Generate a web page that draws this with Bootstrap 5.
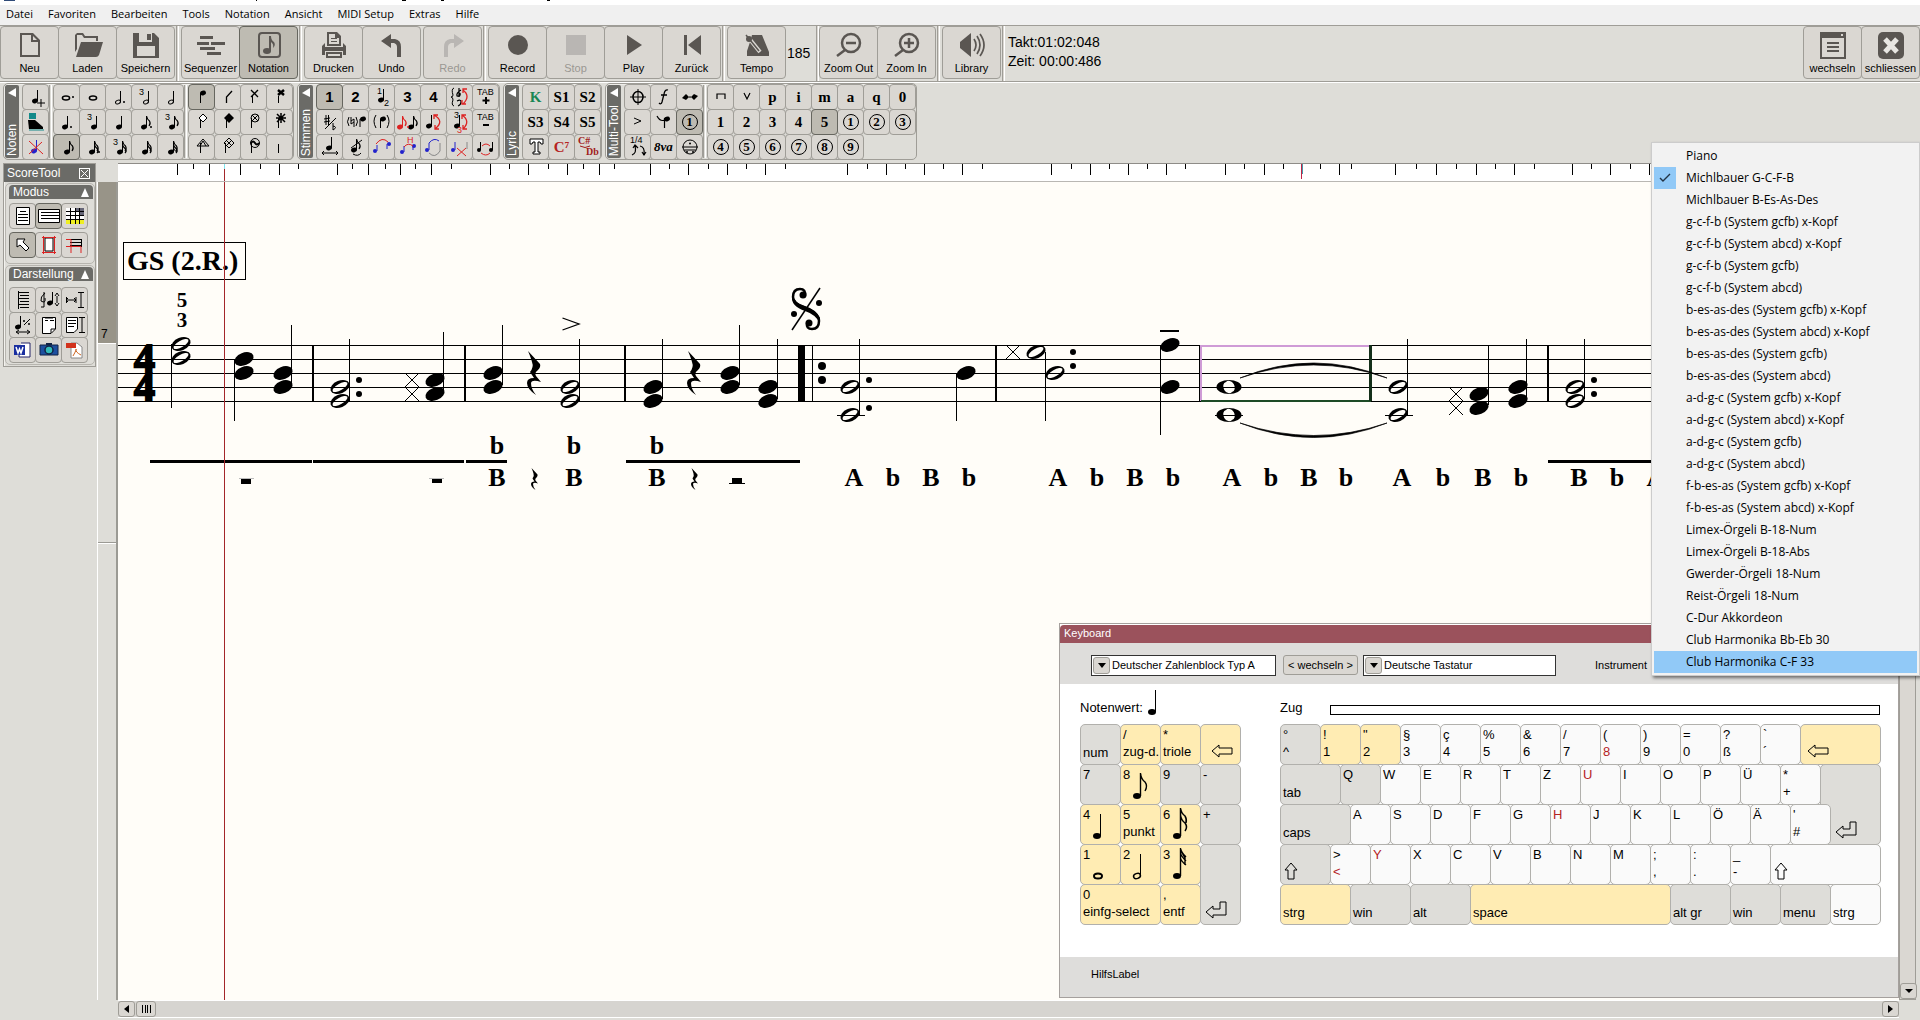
<!DOCTYPE html>
<html lang="de">
<head>
<meta charset="utf-8">
<meta name="viewport" content="width=device-width, initial-scale=1">
<title>Notation</title>
<link href="https://cdn.jsdelivr.net/npm/bootstrap@5.3.0/dist/css/bootstrap.min.css" rel="stylesheet">
<style>
:root{--face:#deddd8;--btn:#dad7d2;--line:#9f9d97;--dark:#6b6b67;--ink:#5a5652;--paper:#fffdf8}
body{background:var(--face);font:11px/14px "Liberation Sans",Arial,sans-serif;color:#000;overflow:hidden}
button{font:inherit;color:inherit;padding:0}
svg{display:block;flex:none}
.title-rest{height:5px;background:#fff}
.menubar{height:20px;background:#f0f0f0;font:11px/18px "Open Sans","Noto Sans",sans-serif;padding-left:6px}
.menubar a{color:#000;text-decoration:none;margin-right:15px;white-space:nowrap}
.bar-one{height:57px;border-top:1px solid var(--line);border-bottom:1px solid var(--line);padding-right:1px}
.tool{width:59px;height:53px;margin-right:-1px;border:1px solid var(--line);border-radius:4px;background:var(--btn);display:flex;flex-direction:column;align-items:center;padding-top:3px;color:#000;white-space:nowrap}
.tool svg{width:30px;height:30px;fill:var(--ink);stroke:none;color:var(--ink);margin-bottom:1px}
.tool:disabled{color:#9a9893}
.tool:disabled svg{fill:#b9b6b3;color:#b9b6b3}
.pressed{background:#bebbb2!important;border-color:#66665f!important;z-index:1;position:relative}
.gapline{width:3px;margin:0 2px;border-left:1px solid var(--line);border-right:1px solid #fff;background:var(--btn);flex:none}
.slot{width:3px}
.tempo{width:31px;border:0;background:transparent;font-size:14px;padding:0 0 2px 2px;flex:none}
.clock{font-size:14px;line-height:19px;padding:7px 0 0 3px;white-space:nowrap}
.bar-two{height:81px;padding:0 3px 3px;border-top:1px solid #fff;gap:3px}
.grp{border:1px solid var(--line);border-radius:5px;padding:0 1px;display:flex;box-shadow:inset 1px 1px 0 #efeeea}
.strip{width:14px;margin:1px 3px 1px 0;background:var(--dark);border:0;border-radius:2px;color:#fff;display:flex;flex-direction:column;align-items:center;justify-content:space-between;padding:3px 0 2px;font-size:12px;line-height:14px}
.strip span{writing-mode:vertical-rl;transform:rotate(180deg)}
.cells{display:grid;grid-auto-rows:25px}
.c1{grid-template-columns:26px}.c3{grid-template-columns:repeat(3,26px)}.c4{grid-template-columns:repeat(4,26px)}
.c5{grid-template-columns:repeat(5,26px)}.c7{grid-template-columns:repeat(7,26px)}.c8{grid-template-columns:repeat(8,26px)}
.cells button{margin:0 -1px -1px 0;border:1px solid var(--line);border-radius:4px;background:var(--btn);display:flex;align-items:center;justify-content:center;overflow:hidden}
.cells svg{width:24px;height:24px}
.split{width:3px;margin:1px;border-left:1px solid var(--line);border-right:1px solid #fff}
.num{font-size:15px;font-weight:700}
.ser{font-family:"Liberation Serif","Times New Roman",serif;font-size:15px;font-weight:700}
.ring{width:16px;height:16px;border:1px solid #000;border-radius:50%;line-height:14px;font-size:13px}
.tx{font:9px "Liberation Sans",sans-serif;stroke:none}
.ts{font:bold 10px "Liberation Serif",serif;stroke:none}
.oct{font:italic bold 13px "Liberation Serif",serif}
.ln{fill:none;stroke:currentColor}
.workspace{flex:1;min-height:0}
.side{width:97px;padding:0 1px 0 3px;flex:none}
.panel{border:1px solid var(--line);box-shadow:inset 1px 1px 0 #f3f2ee}
.panel-title{height:18px;background:var(--dark);color:#fff;font-size:12px;line-height:17px;padding:0 5px 0 3px}
.panel-title button{width:11px;height:11px;border:1px solid #fff;background:none}
.sect{border:1px solid #b7b5af;border-radius:5px;margin:1px 0 1px 1px;padding:1px 1px 6px 3px}
.sect-h{height:14px;width:100%;border:0;background:var(--dark);color:#fff;border-radius:4px 4px 0 0;font-size:12px;line-height:14px;padding:0 4px}
.sect .cells{margin:4px 0 0 0}
.sect-low{padding-bottom:2px}
.sect-low .cells{margin-top:6px}
.track{width:21px;flex:none;border-left:1px solid #fff;border-right:2px solid #9b9a94;margin-top:19px}
.track-on{height:162px;background:#989488;border-bottom:1px solid #fff;font-size:12px;padding:0 0 2px 3px}
.track-off{height:200px;border-bottom:1px solid #fff;box-shadow:0 -1px 0 #9b9a94 inset}
.ruler{height:19px;background:#fff;border-top:1px solid #8e8c88;border-bottom:1px solid #b9b7b3}
.sheet{background:var(--paper);flex:1;position:relative;min-height:0}
.fit{position:absolute;inset:0;width:100%;height:100%}
.lyr{font:bold 26px "Liberation Serif","Times New Roman",serif;text-anchor:middle}
.fing{font:bold 21px "Liberation Serif","Times New Roman",serif;text-anchor:middle}
.mark-t{font:bold 28px "Liberation Serif","Times New Roman",serif}
.sig{font:bold 42px "Liberation Serif","Times New Roman",serif;stroke:#000;stroke-width:2}
.vscroll{width:17px;flex:none;border:1px solid var(--line);background:var(--btn);margin-right:4px}
.vscroll button,.hscroll button{border:1px solid var(--line);background:var(--btn);border-radius:3px;width:17px;height:16px;display:flex;align-items:center;justify-content:center}
.hscroll .thumb{width:20px;margin-left:1px}
.hrow{height:20px;padding:0 21px 0 118px}
.hscroll{height:18px;background:#d6d4d0;border-top:1px solid #fff;border-bottom:1px solid #fff}
.kbwin{position:absolute;right:0;bottom:2px;width:840px;border:1px solid #a5a09d;background:#fff;overflow:hidden}
.kb-title{height:18px;margin-top:1px;background:#9b525c;color:#fff;line-height:17px;padding-left:4px;border-radius:4px 0 0 0}
.kb-tools{height:41px;background:#dedddb;padding:3px 0 0 31px}
.combo{height:21px;border:1px solid #333;background:#fff;display:flex;flex:none}
.combo i{width:17px;margin:1px;border:1px solid var(--line);background:var(--btn);border-radius:3px;display:flex;align-items:center;justify-content:center}
.combo select{appearance:none;border:0;background:#fff;flex:1;padding:0 0 0 1px;font-size:11px;min-width:0}
.wide-a{width:185px}.wide-b{width:193px}
.inst{margin:0 8px 0 39px}
.kb-swap{width:75px;height:20px;border:1px solid var(--line);border-radius:3px;background:var(--btn);margin:0 5px 0 7px;flex:none}
.kb-body{height:273px;padding:0 0 0 20px;gap:40px;font-size:13px;line-height:17px}
.kb-head{height:40px;padding-bottom:8px}
.nval{margin-left:5px}
.zl{width:50px}
.zug{flex:1;height:10px;border:1px solid #000;margin-bottom:1px}
.keys-n{display:grid;grid-template-columns:repeat(4,40px);grid-auto-rows:40px}
.keys-m{display:grid;grid-template-columns:repeat(60,10px);grid-auto-rows:40px}
.key{margin:0 -1px -1px 0;border:1px solid #b1b0ac;border-radius:5px;background:#fafafa;text-align:left;padding:1px 0 3px 2px;display:flex;flex-direction:column;white-space:nowrap;position:relative;grid-column:span 4}
.keys-n .key{grid-column:span 1}
.kg{background:#deddd9}.ky{background:#ffecb3}
.kb{justify-content:flex-end}
.kr{color:#b5231f}
.key svg{position:absolute;overflow:visible}
.s5{grid-column:span 5}.s6{grid-column:span 6}.s7{grid-column:span 7}.s8{grid-column:span 8}.s11{grid-column:span 11}.s20{grid-column:span 20}
.enter{grid-row:2/span 2;grid-column:55/61}
.hash{grid-row:3;grid-column:52/span 4;z-index:1}
.keys-n .plus2{grid-row:4/span 2;grid-column:4}
.keys-n .zero{grid-column:1/span 2}
.pic{right:9px;bottom:4px;width:22px;height:30px}
.arr{left:4px;bottom:3px;width:24px;height:20px;fill:none;stroke:#000}
.arr-in{left:14px}
.ups{left:2px}
.kb-foot{height:40px;background:#dedddb;padding:10px 0 0 31px}
.ctx{position:absolute;top:142px;right:0;width:269px;background:#f2f2f2;border:1px solid #ccc;padding:2px;font:12px/22px "Open Sans","Noto Sans",sans-serif;box-shadow:2px 2px 3px rgba(0,0,0,.5);z-index:10}
.ctx li{height:22px;display:flex}
.ctx li button{border:0;background:none;flex:1;text-align:left;display:flex;white-space:nowrap}
.ctx .tick{width:22px;height:22px;margin-right:10px;flex:none;display:flex;align-items:center;justify-content:center}
.ctx .on{background:#91c9f7}
</style>
<script src="https://cdn.jsdelivr.net/npm/bootstrap@5.3.0/dist/js/bootstrap.bundle.min.js"></script>
</head>
<body class="vh-100 d-flex flex-column position-relative">
<svg width="0" height="0" class="position-absolute" aria-hidden="true"><defs>
<ellipse id="hd" rx="3" ry="2.3" transform="rotate(-20)"/>
<g id="q4"><use href="#hd"/><path d="M2.5 0V-11" class="ln"/></g>
<g id="h2"><ellipse rx="2.6" ry="1.8" transform="rotate(-25)" class="ln"/><path d="M2.5 0V-11" class="ln"/></g>
<g id="f1"><use href="#q4"/><path d="M2.5 -11Q3 -8 5.500 -6Q7 -3.500 5 -1" class="ln" stroke-width="1.2"/></g>
<g id="f2"><use href="#f1"/><path d="M2.5 -7Q3 -5 5.500 -3Q7 -1 5 1" class="ln" stroke-width="1.2"/></g>
<g id="f3"><use href="#f2"/><path d="M2.5 -4Q3 -2 5.500 0" class="ln"/></g>
<ellipse id="w1" rx="3.6" ry="2" fill="none" stroke="currentColor" stroke-width="1.5"/>
<path id="st" d="M10.500 8V18" class="ln"/>
<ellipse id="nf" rx="10" ry="6.300" transform="rotate(-22)"/>
<path id="no" fill-rule="evenodd" d="M-9.300 3.700A10 6.300 -22 1 1 9.300 -3.700A10 6.300 -22 1 1 -9.300 3.700ZM-7.300 4.200A8.400 3.200 -30 1 0 7.300 -4.200A8.400 3.200 -30 1 0 -7.300 4.200Z"/>
<path id="nw" fill-rule="evenodd" d="M-12.500 0A12.500 7 0 1 1 12.500 0A12.500 7 0 1 1 -12.500 0ZM-3 -5A6 4.500 60 1 0 3 5A6 4.500 60 1 0 -3 -5Z"/>
<path id="rest" d="M1 0L13 13Q14 16 11 19Q7 22 9 25L14 31Q5 28 4 32Q4 38 9 44Q0 38 0 32Q0 27 7 27L3 21Q7 16 5 11Q4 7 1 0Z"/>
<path id="xx" d="M-7 -7L7 7M-7 7L7 -7" fill="none" stroke="#000"/>
<path id="la" d="M1 10L8 4V7H21V13H8V16Z"/>
<path id="ua" d="M8 2L14 9H11V18H5V9H2Z"/>
<path id="ea" d="M1 11L8 5V8H15V1H21V14H8V17Z"/>
</defs></svg>

<div class="title-rest"><svg width="600" height="5"><path d="M4 0H15V1H4Z" fill="#2f4a78"/><path d="M256 0h1v1h-1zM402 0h4v1h-4zM441 0h3v1h-3zM547 0h3v1h-3z"/></svg></div>
<nav class="menubar d-flex" aria-label="Hauptmenü">
<a href="#">Datei</a><a href="#">Favoriten</a><a href="#">Bearbeiten</a><a href="#">Tools</a><a href="#">Notation</a><a href="#">Ansicht</a><a href="#">MIDI Setup</a><a href="#">Extras</a><a href="#">Hilfe</a>
</nav>

<div class="bar-one d-flex align-items-stretch">
<button class="tool"><svg viewBox="0 0 30 30"><path d="M5 3H18L25 10V27H5ZM7 5V25H23V12H16V5ZM18 6V10H22Z" fill-rule="evenodd"/></svg>Neu</button>
<button class="tool"><svg viewBox="0 0 30 30"><path d="M2 22V5L4 3H10L12 6H25V11H23V8H11L9 5H4V19Z"/><path d="M8 12H30L26 25Q25 27 23 27H3Z"/></svg>Laden</button>
<button class="tool"><svg viewBox="0 0 30 30"><path fill-rule="evenodd" d="M2 3H23L28 8V28H2ZM8 3V12H21V3ZM6 16V26H24V16Z"/><path d="M16 4H20V10H16Z"/></svg>Speichern</button>
<span class="gapline"></span>
<button class="tool"><svg viewBox="0 0 30 30"><path d="M4 6H17V9H4ZM1 12H13V15H1ZM15 12H29V15H15ZM4 17H19V20H4ZM11 22H25V25H11Z"/></svg>Sequenzer</button>
<button class="tool pressed"><svg viewBox="0 0 30 30"><rect x="5" y="3" width="21" height="24" rx="3" fill="none" stroke="currentColor" stroke-width="2"/><ellipse cx="13" cy="21" rx="4" ry="3"/><path d="M15 21V6H17Q17 10 20 12Q22 15 19 18Q20 14 17 12V21Z"/></svg>Notation</button>
<span class="gapline"></span>
<button class="tool"><svg viewBox="0 0 30 30"><path fill-rule="evenodd" d="M8 2H18L22 6V16H8ZM10 4V14H20V8H16V4ZM12 8h6v1h-6zM12 11h6v1h-6z"/><path fill-rule="evenodd" d="M6 13V17H24V13L27 16V25H24V21H6V25H3V16ZM7 22H23V28H7ZM9 24V26H21V24Z"/></svg>Drucken</button>
<button class="tool"><svg viewBox="0 0 30 30"><path d="M4 11L14 4V9H18Q24 10 24 17V27H20V17Q20 14 17 13H14V18Z"/></svg>Undo</button>
<span class="slot"></span>
<button class="tool" disabled><svg viewBox="0 0 30 30"><path d="M26 11L16 4V9H12Q6 10 6 17V27H10V17Q10 14 13 13H16V18Z"/></svg>Redo</button>
<span class="gapline"></span>
<button class="tool"><svg viewBox="0 0 30 30"><circle cx="15" cy="15" r="10"/></svg>Record</button>
<button class="tool" disabled><svg viewBox="0 0 30 30"><path d="M5 5H25V25H5Z"/></svg>Stop</button>
<button class="tool"><svg viewBox="0 0 30 30"><path d="M8 5L23 15L8 25Z"/></svg>Play</button>
<button class="tool"><svg viewBox="0 0 30 30"><path d="M7 5H10V25H7ZM24 5V25L11 15Z"/></svg>Zurück</button>
<span class="gapline"></span>
<button class="tool"><svg viewBox="0 0 30 30"><path d="M10 5H20L27 22V26H5V21L8 12Z"/><path d="M6 7L18 22" stroke="#dad7d2" stroke-width="4"/><path d="M4 5L17 21" stroke="currentColor" stroke-width="1.500"/><circle cx="7" cy="9" r="3"/></svg>Tempo</button>
<input class="tempo" value="185" aria-label="Tempo-Wert">
<span class="gapline ms-0 me-0"></span>
<button class="tool"><svg viewBox="0 0 30 30"><g fill="none" stroke="currentColor" stroke-width="2.500"><circle cx="17" cy="13" r="9"/><path d="M11 20L3 26M12 13H22"/></g></svg>Zoom Out</button>
<button class="tool"><svg viewBox="0 0 30 30"><g fill="none" stroke="currentColor" stroke-width="2.500"><circle cx="17" cy="13" r="9"/><path d="M11 20L3 26M12 13H22M17 8V18"/></g></svg>Zoom In</button>
<span class="gapline"></span>
<button class="tool"><svg viewBox="0 0 30 30"><path d="M3 12L14 3V27L3 18Z"/><path d="M17 9Q21 15 17 21M20 6Q26 15 20 24M23 4Q31 15 23 26" fill="none" stroke="currentColor" stroke-width="1.700"/></svg>Library</button>
<span class="gapline me-0"></span>
<div class="clock">Takt:01:02:048<br>Zeit: 00:00:486</div>
<div class="ms-auto d-flex">
<button class="tool"><svg viewBox="0 0 30 30"><path fill-rule="evenodd" d="M2 2H28V29H2ZM4 8V27H26V8ZM23 4v2h2v-2z"/><path d="M9 12H21V14H9ZM9 16H21V18H9ZM9 20H21V22H9Z"/></svg>wechseln</button>
<button class="tool"><svg viewBox="0 0 30 30"><rect x="2" y="2" width="26" height="27" rx="5"/><path d="M9 9L21 22M21 9L9 22" stroke="#e8e6e2" stroke-width="5"/></svg>schliessen</button>
</div>
</div>

<div class="bar-two d-flex align-items-stretch">
<section class="grp"><button class="strip"><svg width="8" height="10"><path d="M8 0V9L0 5Z" fill="#fff"/></svg><span>Noten</span></button>
<div class="cells c1">
<button aria-label="Note einfügen"><svg><use href="#q4" x="11" y="16"/><path class="ln" d="M17 14V22M13 18H21"/></svg></button>
<button aria-label="Schritteingabe"><svg><path d="M5 3H12V9H5Z" fill="#138a8a"/><path d="M4 10H11L19 17V19H5Z"/><path d="M5 20H20" stroke="#138a8a"/></svg></button>
<button aria-label="Note löschen"><svg><g fill="#22c" color="#22c"><use href="#q4" x="10" y="16"/></g><path d="M5 6L19 19M18 7L5 19" stroke="#d22"/></svg></button>
</div><span class="split"></span>
<div class="cells c5">
<button aria-label="Ganze punktiert"><svg><use href="#w1" x="11" y="13"/><circle cx="18" cy="12" r="1"/></svg></button>
<button aria-label="Ganze"><svg><use href="#w1" x="12" y="13"/></svg></button>
<button aria-label="Halbe punktiert"><svg><use href="#h2" x="11" y="17"/><circle cx="17" cy="17" r="1"/></svg></button>
<button aria-label="Halbe Triole"><svg><text x="6" y="10" class="tx">3</text><use href="#h2" x="13" y="17"/></svg></button>
<button aria-label="Halbe"><svg><use href="#h2" x="12" y="17"/></svg></button>
<button aria-label="Viertel punktiert"><svg><use href="#q4" x="10" y="17"/><circle cx="16" cy="17" r="1"/></svg></button>
<button aria-label="Viertel Triole"><svg><text x="6" y="10" class="tx">3</text><use href="#q4" x="13" y="17"/></svg></button>
<button aria-label="Viertel"><svg><use href="#q4" x="12" y="17"/></svg></button>
<button aria-label="Achtel punktiert"><svg><use href="#f1" x="11" y="17"/><circle cx="18" cy="17" r="1"/></svg></button>
<button aria-label="Achtel Triole"><svg><text x="6" y="10" class="tx">3</text><use href="#f1" x="13" y="17"/></svg></button>
<button aria-label="Achtel" class="pressed"><svg><use href="#f1" x="12" y="17"/></svg></button>
<button aria-label="Sechzehntel punktiert"><svg><use href="#f2" x="11" y="17"/><circle cx="18" cy="17" r="1"/></svg></button>
<button aria-label="Sechzehntel Triole"><svg><text x="6" y="10" class="tx">3</text><use href="#f2" x="13" y="17"/></svg></button>
<button aria-label="Sechzehntel"><svg><use href="#f2" x="12" y="17"/></svg></button>
<button aria-label="Zweiunddreißigstel"><svg><use href="#f3" x="12" y="17"/></svg></button>
</div><span class="split"></span>
<div class="cells c4">
<button aria-label="Kopf normal" class="pressed"><svg><use href="#st"/><use href="#hd" x="13" y="8"/></svg></button>
<button aria-label="Kopf Strich"><svg><path class="ln" d="M10.500 18V12L16 6" stroke-width="1.300"/></svg></button>
<button aria-label="Kopf x"><svg><path class="ln" d="M10.500 18V11"/><path class="ln" d="M9 5L16 12M16 5L9 12" stroke-width="1.300"/></svg></button>
<button aria-label="Kopf X"><svg><path class="ln" d="M10.500 18V11"/><path class="ln" d="M10 5L16 10M16 5L10 10" stroke-width="2.500"/></svg></button>
<button aria-label="Kopf Raute"><svg><use href="#st"/><path d="M13 4L17 8L13 12L9 8Z" fill="#fff" stroke="#000"/></svg></button>
<button aria-label="Kopf Raute voll"><svg><use href="#st"/><path d="M13 3L18 8L13 13L8 8Z"/></svg></button>
<button aria-label="Kopf Kreis x"><svg><use href="#st" x="-1"/><g class="ln"><circle cx="13" cy="8" r="4"/><path d="M10 5L16 11M16 5L10 11"/></g></svg></button>
<button aria-label="Kopf Stern"><svg><use href="#st"/><path class="ln" stroke-width="1.500" d="M9 4L17 12M17 4L9 12M13 3V13M8 8H18"/></svg></button>
<button aria-label="Kopf Dreieck"><svg><use href="#st"/><path class="ln" d="M13 4L19 11H7ZM10 11L13 6L16 11"/></svg></button>
<button aria-label="Kopf Raute x"><svg><use href="#st" x="-1"/><path class="ln" d="M13 3L18 8L13 13L8 8ZM10 5L16 11M16 5L10 11"/></svg></button>
<button aria-label="Kopf Kreis Welle"><svg><use href="#st" x="-1"/><circle class="ln" cx="13" cy="8" r="4.500"/><path class="ln" stroke-width="2" d="M9 8Q11 5 13 8T17 8"/></svg></button>
<button aria-label="Nur Hals"><svg><path class="ln" d="M10.500 9V18"/></svg></button>
</div></section>

<section class="grp"><button class="strip"><svg width="8" height="10"><path d="M8 0V9L0 5Z" fill="#fff"/></svg><span>Stimmen</span></button>
<div class="cells c7">
<button class="num pressed">1</button><button class="num">2</button>
<button aria-label="Stimme 1/2"><svg><text x="7" y="9" class="tx">1</text><use href="#q4" x="11" y="15"/><text x="14" y="21" class="tx">2</text></svg></button>
<button class="num">3</button><button class="num">4</button>
<button aria-label="System tauschen"><svg><path class="ln" d="M6 3Q3 4 5 10Q5 12 3 12Q5 12 5 15Q3 20 6 21"/><path class="ln" d="M11 3V12M13 5Q8 8 9 11Q13 12 12 8M9 16Q13 14 13 17Q13 20 10 21" stroke-width="1.200"/><path d="M15 5Q23 11 15 19M15 8V4H19M14 15V19H18" fill="none" stroke="#d22" stroke-width="1.300"/></svg></button>
<button aria-label="Tab plus"><svg><text x="3" y="10" class="tx">TAB</text><path d="M12 12V19M8.500 15.500H15.500" stroke="#000" stroke-width="2"/></svg></button>
<button aria-label="Vorzeichen"><svg><path class="ln" d="M6 9L12 8M6 12L12 11M8 5V15M10.500 5V15M7 19L18 8M15 13V20Q20 17 15 16"/></svg></button>
<button aria-label="Vorzeichen Klammer"><svg><path class="ln" d="M5 7Q2 12 5 16M12 7Q15 12 12 16M7 7V14L10 12M10 17V9L7 11M16 17V9"/><use href="#hd" x="19" y="9"/></svg></button>
<button aria-label="Note Klammer"><svg><path class="ln" d="M6 5Q2 11 6 18M17 5Q21 11 17 18M10.500 18V9"/><use href="#hd" x="13" y="9"/></svg></button>
<button aria-label="Achtel umwandeln"><svg><g fill="#d22" color="#d22"><use href="#f1" x="4" y="17"/></g><use href="#f1" x="15" y="17"/><circle cx="12" cy="17" r="1" fill="#d22"/></svg></button>
<button aria-label="Hals drehen"><svg><use href="#q4" x="7" y="16"/><path d="M12 5Q23 11 13 19M12 9V5H16M13 15V19H17" fill="none" stroke="#d22" stroke-width="1.300"/></svg></button>
<button aria-label="Triole drehen"><svg><text x="6" y="8" class="tx">3</text><use href="#q4" x="9" y="16"/><text x="9" y="23" class="tx" fill="#d22">3</text><path d="M14 5Q23 11 15 19M14 9V5H18M15 15V19H19" fill="none" stroke="#d22" stroke-width="1.300"/></svg></button>
<button aria-label="Tab minus"><svg><text x="3" y="10" class="tx">TAB</text><path d="M9 15H15" stroke="#000" stroke-width="2"/></svg></button>
<button aria-label="Abstand"><svg><use href="#q4" x="11" y="13"/><path class="ln" d="M4 18H20M6 16L4 18L6 20M18 16L20 18L18 20"/></svg></button>
<button aria-label="Vorschlag"><svg><use href="#f1" x="10" y="15"/><path class="ln" d="M7 13L18 5M9 19Q14 22 17 18"/></svg></button>
<button aria-label="Bogen"><svg><g fill="#22c" color="#22c"><circle cx="5" cy="16" r="2"/><path class="ln" d="M7 16V10M17 9V14"/><circle cx="19" cy="9" r="2"/></g><path d="M6 9Q12 1 18 7" fill="none" stroke="#d22"/></svg></button>
<button aria-label="Hammer-on"><svg><g fill="#22c" color="#22c"><circle cx="6" cy="17" r="2"/><path class="ln" d="M8 17V11M17 10V15"/><circle cx="18" cy="11" r="2"/></g><path d="M8 12Q12 7 17 11" fill="none" stroke="#d22"/><text x="11" y="8" class="tx" fill="#d22">H</text></svg></button>
<button aria-label="Bogen drehen"><svg><circle cx="5" cy="15" r="2" fill="#22c"/><path d="M7 15V8Q12 2 17 6" fill="none" stroke="#22c"/><path d="M7 18Q13 24 18 16V8" fill="none" stroke="#888"/></svg></button>
<button aria-label="Bogen löschen"><svg><g fill="#22c" color="#22c"><circle cx="5" cy="15" r="2"/><path class="ln" d="M7 15V7"/></g><path d="M19 14V7" stroke="#888"/><path d="M9 13L18 21M18 13L9 21" stroke="#d22"/></svg></button>
<button aria-label="Haltebogen"><svg><circle cx="5" cy="15" r="2"/><circle cx="17" cy="15" r="2"/><path class="ln" d="M6.500 15V7M18.500 15V7"/><path d="M8 11Q12 7 16 11M7 18Q12 22 16 18" fill="none" stroke="#d22"/></svg></button>
</div></section>

<section class="grp"><button class="strip"><svg width="8" height="10"><path d="M8 0V9L0 5Z" fill="#fff"/></svg><span>Lyric</span></button>
<div class="cells c3 ser">
<button class="text-success">K</button><button>S1</button><button>S2</button>
<button>S3</button><button>S4</button><button>S5</button>
<button aria-label="Text"><svg><path d="M6 4H19V9H17L16 7H14V17H16V19H9V17H11V7H9L8 9H6Z" fill="#fff" stroke="#000"/></svg></button>
<button class="kr">C⁷</button>
<button aria-label="Akkord transponieren"><svg fill="#a11c1c"><text x="2" y="9" class="ts">C#</text><text x="10" y="20" class="ts">Db</text><path d="M4 11Q9 14 14 11" fill="none" stroke="#a11c1c"/></svg></button>
</div></section>

<section class="grp"><button class="strip"><svg width="8" height="10"><path d="M8 0V9L0 5Z" fill="#fff"/></svg><span>Multi-Tool</span></button>
<div class="cells c3 ser">
<button aria-label="Coda"><svg><g class="ln"><ellipse cx="12" cy="12" rx="5" ry="5.500" stroke-width="1.500"/><path d="M12 4V20M4 12H20"/></g></svg></button>
<button aria-label="Dynamik"><svg><path class="ln" stroke-width="1.300" d="M16 5Q13 4 12 9L10 17Q9 20 7 18M9 10H15"/></svg></button>
<button aria-label="Triller"><svg><path d="M4 13L8 9L12 13L16 9L20 11L16 15L12 11L8 15Z"/></svg></button>
<button aria-label="Akzent"><svg><path class="ln" d="M8 8L15 11L8 14"/></svg></button>
<button aria-label="Vorhalt"><svg><path class="ln" d="M5 6Q8 12 13 10M12.500 8V18" stroke-width="1.200"/><use href="#hd" x="15" y="9"/></svg></button>
<button class="pressed"><span class="ring">1</span></button>
<button aria-label="Viertelton"><svg><text x="4" y="8" class="tx">1/4</text><path class="ln" stroke-width="1.200" d="M6 20Q11 18 9 11M7 13L9 10L12 13M14 11Q19 12 18 19M16 17L18 20L20 17"/></svg></button>
<button aria-label="Oktave"><svg><text x="2" y="16" class="oct">8va</text></svg></button>
<button aria-label="Griffbild"><svg><g class="ln"><circle cx="12" cy="12" r="7"/><path d="M4 12H20M6 15H18"/></g><circle cx="12" cy="8.500" r="1"/><circle cx="9" cy="17" r="1"/><circle cx="15" cy="17" r="1"/></svg></button>
</div><span class="split"></span>
<div class="cells c8 ser">
<button aria-label="Abstrich"><svg><path class="ln" stroke-width="1.200" d="M8 14V9H16V14"/></svg></button>
<button aria-label="Aufstrich"><svg><path class="ln" stroke-width="1.200" d="M9 8L12 14L15 8"/></svg></button>
<button>p</button><button>i</button><button>m</button><button>a</button><button>q</button><button>0</button>
<button>1</button><button>2</button><button>3</button><button>4</button><button class="pressed">5</button>
<button><span class="ring">1</span></button><button><span class="ring">2</span></button><button><span class="ring">3</span></button>
<button><span class="ring">4</span></button><button><span class="ring">5</span></button><button><span class="ring">6</span></button><button><span class="ring">7</span></button><button><span class="ring">8</span></button><button><span class="ring">9</span></button>
</div></section>
</div>

<main class="workspace d-flex">
<aside class="side">
<div class="panel">
<div class="panel-title d-flex justify-content-between align-items-center">ScoreTool<button aria-label="Schließen"><svg width="9" height="9"><path d="M1 1L8 8M8 1L1 8" stroke="#fff"/></svg></button></div>
<div class="sect"><button class="sect-h d-flex justify-content-between align-items-center">Modus<svg width="8" height="9"><path d="M4 0L8 9H0Z" fill="#fff"/></svg></button>
<div class="cells c3">
<button aria-label="Seite"><svg><path d="M5.500 3.500H18.500V20.500H5.500Z" fill="#fff" stroke="#000"/><path class="ln" d="M9 7.500H15M7 10.500H17M7 13.500H17M7 16.500H17"/></svg></button>
<button aria-label="Endlos" class="pressed"><svg><path d="M1.500 5.500H22.500V18.500H1.500Z" fill="#fff" stroke="#000"/><path class="ln" d="M4 8.500H22M4 11.500H22M4 14.500H22"/></svg></button>
<button aria-label="Raster"><svg><path d="M3 4H21V20H3Z" fill="#fff"/><path d="M12 4H21V8H12ZM16 8H21V12H16Z" fill="#667"/><path d="M3 16H21V20H3Z" fill="#ee2"/><path class="ln" d="M3 7.500H21M3 11.500H21M3 15.500H21M7.500 4V20M12.500 4V20M16.500 4V20"/></svg></button>
</div>
<div class="cells c3">
<button aria-label="Zeiger" class="pressed"><svg><path d="M6 6H14L12 9L18 15L15 18L9 12L6 14Z" fill="#fff" stroke="#000"/></svg></button>
<button aria-label="Rahmen"><svg><path d="M8 5H16V18H8Z" fill="#fff" stroke="#000"/><path d="M6.500 3V21M17.500 3V21M5 4.500H19M5 19.500H19" fill="none" stroke="#d22"/></svg></button>
<button aria-label="Zeile"><svg><path class="ln" d="M7 6.500H19M7 9.500H19M7 12.500H19M18.500 6V14"/><path d="M3 6.500H8V20M3 13.500H18V20" fill="none" stroke="#d22"/></svg></button>
</div></div>
<div class="sect sect-low"><button class="sect-h d-flex justify-content-between align-items-center">Darstellung<svg width="8" height="9"><path d="M4 0L8 9H0Z" fill="#fff"/></svg></button>
<div class="cells c3">
<button aria-label="Systeme"><svg><path class="ln" d="M7.500 3V21M7 4.500H18M9 7.500H18M7 10.500H18M9 13.500H18M7 16.500H18M9 19.500H18"/></svg></button>
<button aria-label="Schlüssel"><svg><path class="ln" d="M7 4V19M8 5Q3 9 4 13Q9 16 8 10M20 8V15M18 8L20 5L22 8M18 15L20 18L22 15M4 19H7"/><use href="#q4" x="13" y="15"/></svg></button>
<button aria-label="Abstände"><svg><path class="ln" d="M3 12H13M3.500 9V15M13 9V15M5 10L3 12L5 14M11 10L13 12L11 14M18 5V19M15 4.500H21M15 19.500H21"/></svg></button>
<button aria-label="Notengröße"><svg><use href="#q4" x="7" y="14"/><path class="ln" d="M13 12L19 6M6 19H18M8 17L5 19L8 21M16 17L19 19L16 21"/><circle cx="13" cy="8" r="1"/><circle cx="18" cy="11" r="1"/></svg></button>
<button aria-label="Blatt"><svg><path d="M5.500 4.500H18.500V16L14 20.500H5.500Z" fill="#fff" stroke="#000"/><path class="ln" d="M8 7.500H11M13 7.500H17M14 20V16H18M8 5H16"/></svg></button>
<button aria-label="Blatthöhe"><svg><path d="M3.500 4.500H14.500V16L11 19.500H3.500Z" fill="#fff" stroke="#000"/><path class="ln" d="M5 7.500H13M5 10.500H13M5 13.500H11M19 5V19M16 4.500H22M16 19.500H22"/></svg></button>
<button aria-label="Word"><svg><path d="M10 5H19V19H8V16" fill="#fff" stroke="#226"/><path d="M3 7H14V17H3Z" fill="#1a2fa0"/><path d="M5 9L7 15L8.500 11L10 15L12 9" fill="none" stroke="#fff" stroke-width="1.500"/></svg></button>
<button aria-label="Foto"><svg><path d="M3 7H21V17H3Z" fill="#1d4fa0" stroke="#124"/><path d="M9 5H15V7H9Z" fill="#124"/><circle cx="12" cy="12" r="4" fill="#3bb" stroke="#124" stroke-width="1.500"/></svg></button>
<button aria-label="PDF"><svg><path d="M8 5H14L19 9V20H8Z" fill="#fff" stroke="#888"/><path d="M3 5H13V10H3Z" fill="#d2321c"/><path d="M10 18Q14 11 13 11Q12 14 18 17" fill="none" stroke="#c62"/></svg></button>
</div></div>
</div>
</aside>

<div class="track"><div class="track-on d-flex align-items-end">7</div><div class="track-off"></div></div>

<div class="d-flex flex-column flex-grow-1 overflow-hidden">
<div class="ruler overflow-hidden"><svg width="100%" height="17" shape-rendering="crispEdges"><g transform="translate(-118 -164)" fill="none" stroke="#000">
<path d="M177.500 164v11M209.500 164v11M240.500 164v11M279.500 164v11M337.500 164v11M368.500 164v11M400.500 164v11M431.500 164v11M490.500 164v11M528.500 164v11M567.500 164v11M599.500 164v11M650.500 164v11M688.500 164v11M727.500 164v11M765.500 164v11M847.500 164v11M886.500 164v11M924.500 164v11M962.500 164v11M1051.500 164v11M1090.500 164v11M1128.500 164v11M1166.500 164v11M1225.500 164v11M1264.500 164v11M1339.500 164v11M1395.500 164v11M1436.500 164v11M1476.500 164v11M1514.500 164v11M1572.500 164v11M1610.500 164v11M1649.500 164v11"/>
<path d="M193.500 164v5M260.500 164v5M298.500 164v5M352.500 164v5M385.500 164v5M415.500 164v5M451.500 164v5M509.500 164v5M548.500 164v5M583.500 164v5M614.500 164v5M669.500 164v5M708.500 164v5M746.500 164v5M785.500 164v5M867.500 164v5M905.500 164v5M943.500 164v5M982.500 164v5M1071.500 164v5M1109.500 164v5M1147.500 164v5M1185.500 164v5M1244.500 164v5M1283.500 164v5M1320.500 164v5M1351.500 164v5M1416.500 164v5M1456.500 164v5M1495.500 164v5M1534.500 164v5M1591.500 164v5M1630.500 164v5"/>
<path d="M224.500 164v5" stroke="#7fe6ee"/><path d="M224.500 169v12" stroke="#a3262a"/><path d="M1301.500 164v15" stroke="#c02545"/><path d="M1302.500 164v10" stroke="#49a"/>
</g></svg></div>
<div class="d-flex flex-grow-1">
<div class="sheet">
<svg class="fit"><g transform="translate(-118 -182)">
<g shape-rendering="crispEdges"><path d="M118 345.500H1900M118 359.500H1900M118 373.500H1900M118 387.500H1900M118 401.500H1900M837 415.500H865M1215 415.500H1243M1385 415.500H1413" stroke="#000"/>
<path d="M312 345h2v57h-2zM464 345h2v57h-2zM624 345h2v57h-2zM798 345h7v57h-7zM812 345h1v57h-1zM995 345h2v57h-2zM1547 345h2v57h-2zM1199 345h1v57h-1z"/>
<path d="M171.500 344v64M234.500 359v62M291.500 325v60M349.500 339v62M443.500 332v60M502.500 325v60M579.500 339v62M662.500 339v60M739.500 325v60M777.500 339v60M859.500 339v76M956.500 373v48M1045.500 352v69M1160.500 345v90M1407.500 339v76M1488.500 345v60M1526.500 339v60M1584.500 339v60" stroke="#000"/>
<path d="M150 460h162v3h-162zM313 460h151v3h-151zM466 460h41v3h-41zM626 460h174v3h-174zM1548 460h352v3h-352zM1160 330h19v2h-19zM241 479h10v5h-10zM432 478h10v5h-10zM732 478h10v5h-10zM729 483h16v1h-16z"/>
<path d="M239 478.500h15M429 478.500h15" stroke="#bbb"/>
<path d="M1200.500 401V345.500H1369" fill="none" stroke="#cf9bd6" stroke-width="2"/><path d="M1201 400.500H1371" stroke="#1d4a26" stroke-width="2"/><path d="M1370.500 345V401" stroke="#14301a" stroke-width="3"/></g>
<text class="sig" x="134" y="373">4</text><text class="sig" x="134" y="401">4</text>
<rect x="123.500" y="242.500" width="122" height="37" fill="none" stroke="#000"/><text class="mark-t" x="127" y="270">GS (2.R.)</text>
<text class="fing" x="182" y="307">5</text><text class="fing" x="182" y="327">3</text>
<use href="#no" x="181" y="344"/><use href="#no" x="181" y="358"/><use href="#nf" x="244" y="359"/><use href="#nf" x="244" y="373"/><use href="#nf" x="283" y="373"/><use href="#nf" x="283" y="387"/>
<use href="#no" x="340" y="387"/><use href="#no" x="340" y="401"/><use href="#xx" x="412" y="380"/><use href="#xx" x="412" y="394"/><use href="#nf" x="435" y="380"/><use href="#nf" x="435" y="394"/>
<use href="#nf" x="493" y="373"/><use href="#nf" x="493" y="387"/><use href="#rest" x="527" y="351"/><use href="#no" x="570" y="387"/><use href="#no" x="570" y="401"/>
<path d="M562.500 318L579 324L562.500 330" fill="none" stroke="#000" stroke-width="1.300"/>
<use href="#nf" x="653" y="387"/><use href="#nf" x="653" y="401"/><use href="#rest" x="687" y="351"/><use href="#nf" x="730" y="373"/><use href="#nf" x="730" y="387"/><use href="#nf" x="768" y="387"/><use href="#nf" x="768" y="401"/>
<g transform="translate(791 288)"><path d="M14 8Q15 1 9 1Q2 1 2 9Q2 15 12 19Q28 25 28 33Q28 41 21 41Q15 41 16 35" fill="none" stroke="#000" stroke-width="2.500"/><path d="M2 7Q3 15 14 18Q26 22 29 30V36Q26 27 14 23Q0 18 1 9Z"/><circle cx="12" cy="7" r="3.500"/><circle cx="18" cy="35" r="3.500"/><path d="M29 0L1 42" stroke="#000" stroke-width="1.500"/><circle cx="28" cy="15" r="3"/><circle cx="3" cy="26" r="3"/></g>
<circle cx="822" cy="366" r="4"/><circle cx="822" cy="380" r="4"/>
<g><circle cx="359" cy="380" r="3"/><circle cx="359" cy="394" r="3"/><circle cx="869" cy="380" r="3"/><circle cx="869" cy="408" r="3"/><circle cx="1073" cy="352" r="3"/><circle cx="1073" cy="366" r="3"/><circle cx="1594" cy="380" r="3"/><circle cx="1594" cy="394" r="3"/></g>
<use href="#no" x="850" y="387"/><use href="#no" x="850" y="415"/><use href="#nf" x="966" y="373"/>
<use href="#xx" x="1013" y="352"/><use href="#no" x="1036" y="352"/><use href="#no" x="1055" y="373"/><use href="#nf" x="1170" y="345"/><use href="#nf" x="1170" y="387"/>
<use href="#nw" x="1229" y="387"/><use href="#nw" x="1229" y="415"/>
<path d="M1240 378Q1314 348 1387 378Q1314 352 1240 378ZM1240 423Q1314 452 1387 423Q1314 448 1240 423Z" stroke="#000" stroke-width=".7"/>
<use href="#no" x="1398" y="387"/><use href="#no" x="1398" y="415"/><use href="#xx" x="1456" y="394"/><use href="#xx" x="1456" y="408"/><use href="#nf" x="1479" y="394"/><use href="#nf" x="1479" y="408"/><use href="#nf" x="1518" y="387"/><use href="#nf" x="1518" y="401"/><use href="#no" x="1575" y="387"/><use href="#no" x="1575" y="401"/>
<g class="lyr"><text x="497" y="454">b</text><text x="574" y="454">b</text><text x="657" y="454">b</text>
<text x="497" y="486">B</text><text x="574" y="486">B</text><text x="657" y="486">B</text>
<text x="854" y="486">A</text><text x="893" y="486">b</text><text x="931" y="486">B</text><text x="969" y="486">b</text>
<text x="1058" y="486">A</text><text x="1097" y="486">b</text><text x="1135" y="486">B</text><text x="1173" y="486">b</text>
<text x="1232" y="486">A</text><text x="1271" y="486">b</text><text x="1309" y="486">B</text><text x="1346" y="486">b</text>
<text x="1402" y="486">A</text><text x="1443" y="486">b</text><text x="1483" y="486">B</text><text x="1521" y="486">b</text>
<text x="1579" y="486">B</text><text x="1617" y="486">b</text><text x="1656" y="486">A</text></g>
<use href="#rest" transform="translate(531 468) scale(.5)"/><use href="#rest" transform="translate(691 468) scale(.5)"/>
<path d="M224.500 182V1000" stroke="#a3262a" shape-rendering="crispEdges"/>
</g></svg>

<section class="kbwin" aria-label="Keyboard">
<div class="kb-title">Keyboard</div>
<div class="kb-tools d-flex align-items-center">
<div class="combo wide-a"><i><svg width="8" height="5"><path d="M0 0H8L4 5Z"/></svg></i><select aria-label="Zahlenblock"><option>Deutscher Zahlenblock Typ A</option></select></div>
<button class="kb-swap">&lt; wechseln &gt;</button>
<div class="combo wide-b"><i><svg width="8" height="5"><path d="M0 0H8L4 5Z"/></svg></i><select aria-label="Tastatur"><option>Deutsche Tastatur</option></select></div>
<label for="instr" class="inst">Instrument</label>
<div class="combo wide-a"><select id="instr"><option></option></select></div>
</div>
<div class="kb-body d-flex">
<div><div class="kb-head d-flex align-items-end">Notenwert:<svg width="12" height="26" class="nval"><ellipse cx="4" cy="22" rx="4" ry="3"/><path d="M7.500 22V0" stroke="#000"/></svg></div>
<div class="keys-n">
<button class="key kg kb">num</button><button class="key ky"><span>/</span><span>zug-d.</span></button><button class="key ky"><span>*</span><span>triole</span></button><button class="key ky" aria-label="Rücktaste"><svg class="arr ps-1"><use href="#la" x="2"/></svg></button>
<button class="key kg">7</button><button class="key ky">8<svg class="pic"><ellipse cx="8" cy="26" rx="4" ry="3"/><path d="M11.500 26V3Q12 9 16 12Q19 16 16 21" class="ln" stroke-width="1.400"/></svg></button><button class="key kg">9</button><button class="key kg">-</button>
<button class="key ky">4<svg class="pic"><ellipse cx="8" cy="26" rx="4" ry="3"/><path d="M11.500 26V4" class="ln"/></svg></button><button class="key ky"><span>5</span><span>punkt</span></button><button class="key ky">6<svg class="pic"><ellipse cx="8" cy="26" rx="4" ry="3"/><path d="M11.500 26V-2Q12 3 16 6Q18 9 17 13M11.500 5Q12 10 16 13Q19 17 16 21" class="ln" stroke-width="1.500"/></svg></button><button class="key kg">+</button>
<button class="key ky">1<svg class="pic"><ellipse cx="9" cy="26" rx="4" ry="2.500" class="ln" stroke-width="2"/></svg></button><button class="key ky">2<svg class="pic"><ellipse cx="8" cy="26" rx="3.500" ry="2.500" transform="rotate(-20 8 26)" class="ln" stroke-width="1.500"/><path d="M11.500 26V4" class="ln"/></svg></button><button class="key ky">3<svg class="pic"><ellipse cx="8" cy="26" rx="4" ry="3"/><path d="M11.500 26V-2Q12 2 17 7M11.500 3Q12 6 17 11M11.500 8Q12 11 17 15M11.500 0L16 8V15" class="ln" stroke-width="1.400"/></svg></button><button class="key kg plus2" aria-label="Enter"><svg class="arr"><use href="#ea"/></svg></button>
<button class="key ky zero"><span>0</span><span>einfg-select</span></button><button class="key ky"><span>,</span><span>entf</span></button>
</div></div>
<div><div class="kb-head d-flex align-items-end"><span class="zl">Zug</span><span class="zug"></span></div>
<div class="keys-m">
<button class="key kg"><span>°</span><span>^</span></button><button class="key ky"><span>!</span><span>1</span></button><button class="key ky"><span>"</span><span>2</span></button><button class="key"><span>§</span><span>3</span></button><button class="key"><span>ç</span><span>4</span></button><button class="key"><span>%</span><span>5</span></button><button class="key"><span>&amp;</span><span>6</span></button><button class="key"><span>/</span><span>7</span></button><button class="key"><span>(</span><span class="kr">8</span></button><button class="key"><span>)</span><span>9</span></button><button class="key"><span>=</span><span>0</span></button><button class="key"><span>?</span><span>ß</span></button><button class="key"><span>`</span><span>´</span></button><button class="key ky s8" aria-label="Rücktaste"><svg class="arr"><use href="#la" x="2"/></svg></button>
<button class="key kg enter" aria-label="Enter"><svg class="arr arr-in"><use href="#ea"/></svg></button>
<button class="key kg kb s6">tab</button><button class="key kg">Q</button><button class="key">W</button><button class="key">E</button><button class="key">R</button><button class="key">T</button><button class="key">Z</button><button class="key kr">U</button><button class="key">I</button><button class="key">O</button><button class="key">P</button><button class="key">Ü</button><button class="key"><span>*</span><span>+</span></button>
<button class="key kg kb s7">caps</button><button class="key">A</button><button class="key">S</button><button class="key">D</button><button class="key">F</button><button class="key">G</button><button class="key kr">H</button><button class="key">J</button><button class="key">K</button><button class="key">L</button><button class="key">Ö</button><button class="key">Ä</button><button class="key hash"><span>'</span><span>#</span></button>
<button class="key kg s5" aria-label="Umschalt links"><svg class="arr ups"><use href="#ua"/></svg></button><button class="key"><span>&gt;</span><span class="kr">&lt;</span></button><button class="key kr">Y</button><button class="key">X</button><button class="key">C</button><button class="key">V</button><button class="key">B</button><button class="key">N</button><button class="key">M</button><button class="key"><span>;</span><span>,</span></button><button class="key"><span>:</span><span>.</span></button><button class="key"><span>_</span><span>-</span></button><button class="key s11" aria-label="Umschalt rechts"><svg class="arr ups"><use href="#ua"/></svg></button>
<button class="key ky kb s7">strg</button><button class="key kg kb s6">win</button><button class="key kg kb s6">alt</button><button class="key ky kb s20">space</button><button class="key kg kb s6">alt gr</button><button class="key kg kb s5">win</button><button class="key kg kb s5">menu</button><button class="key kb s5">strg</button>
</div></div>
</div>
<div class="kb-foot">HilfsLabel</div>
</section>
</div>
<div class="vscroll d-flex flex-column justify-content-end"><button aria-label="Nach unten"><svg width="8" height="4"><path d="M0 0H8L4 4Z"/></svg></button></div>
</div>
</div>
</main>
<div class="hrow"><div class="hscroll d-flex"><button aria-label="Nach links"><svg width="5" height="8"><path d="M5 0V8L0 4Z"/></svg></button><button class="thumb" aria-label="Schieber"><svg width="9" height="8"><path d="M.5 0V8M3.500 0V8M5.500 0V8M8.500 0V8" class="ln" shape-rendering="crispEdges"/></svg></button><button class="ms-auto" aria-label="Nach rechts"><svg width="5" height="8"><path d="M0 0V8L5 4Z"/></svg></button></div></div>

<ul class="ctx list-unstyled mb-0">
<li><button><span class="tick"></span>Piano</button></li>
<li><button><span class="tick on"><svg width="12" height="10"><path d="M1 5L4 8L11 1" fill="none" stroke="#234" stroke-width="1.400"/></svg></span>Michlbauer G-C-F-B</button></li>
<li><button><span class="tick"></span>Michlbauer B-Es-As-Des</button></li>
<li><button><span class="tick"></span>g-c-f-b (System gcfb) x-Kopf</button></li>
<li><button><span class="tick"></span>g-c-f-b (System abcd) x-Kopf</button></li>
<li><button><span class="tick"></span>g-c-f-b (System gcfb)</button></li>
<li><button><span class="tick"></span>g-c-f-b (System abcd)</button></li>
<li><button><span class="tick"></span>b-es-as-des (System gcfb) x-Kopf</button></li>
<li><button><span class="tick"></span>b-es-as-des (System abcd) x-Kopf</button></li>
<li><button><span class="tick"></span>b-es-as-des (System gcfb)</button></li>
<li><button><span class="tick"></span>b-es-as-des (System abcd)</button></li>
<li><button><span class="tick"></span>a-d-g-c (System gcfb) x-Kopf</button></li>
<li><button><span class="tick"></span>a-d-g-c (System abcd) x-Kopf</button></li>
<li><button><span class="tick"></span>a-d-g-c (System gcfb)</button></li>
<li><button><span class="tick"></span>a-d-g-c (System abcd)</button></li>
<li><button><span class="tick"></span>f-b-es-as (System gcfb) x-Kopf</button></li>
<li><button><span class="tick"></span>f-b-es-as (System abcd) x-Kopf</button></li>
<li><button><span class="tick"></span>Limex-Örgeli B-18-Num</button></li>
<li><button><span class="tick"></span>Limex-Örgeli B-18-Abs</button></li>
<li><button><span class="tick"></span>Gwerder-Örgeli 18-Num</button></li>
<li><button><span class="tick"></span>Reist-Örgeli 18-Num</button></li>
<li><button><span class="tick"></span>C-Dur Akkordeon</button></li>
<li><button><span class="tick"></span>Club Harmonika Bb-Eb 30</button></li>
<li class="on"><button><span class="tick"></span>Club Harmonika C-F 33</button></li>
</ul>
</body>
</html>
